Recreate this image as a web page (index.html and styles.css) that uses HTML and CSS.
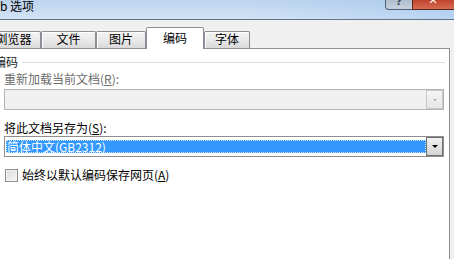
FILE: index.html
```html
<!DOCTYPE html>
<html lang="zh-CN">
<head>
<meta charset="utf-8">
<title>选项</title>
<link rel="stylesheet" href="styles.css">
</head>
<body>
<div class="window">
  <div class="titlebar">
    <div class="title-text">b 选项</div>
    <div class="caps">
      <div class="cap help"><span>?</span></div>
      <div class="cap close"><span>✕</span></div>
    </div>
  </div>
  <div class="tabs">
    <div class="tab t1">浏览器</div>
    <div class="tab t2">文件</div>
    <div class="tab t3">图片</div>
    <div class="tab active">编码</div>
    <div class="tab t5">字体</div>
  </div>
  <div class="panel">
    <div class="group-head">
      <span class="group-label">编码</span>
      <span class="group-line"></span>
    </div>
    <div class="group-body">
      <div class="label disabled">重新加载当前文档(<u>R</u>):</div>
      <div class="combo combo-disabled">
        <div class="combo-value"></div>
        <div class="combo-btn"><span class="arrow arrow-grey"></span></div>
      </div>
      <div class="label label-save">将此文档另存为(<u>S</u>):</div>
      <div class="combo combo-active">
        <div class="combo-value"><span class="selection">简体中文(GB2312)</span></div>
        <div class="combo-btn"><span class="arrow"></span></div>
      </div>
      <label class="check-row">
        <span class="checkbox"></span>
        <span class="check-label">始终以默认编码保存网页(<u>A</u>)</span>
      </label>
    </div>
  </div>
</div>
</body>
</html>
```

FILE: styles.css
```css
* { box-sizing: border-box; }
html, body {
  margin: 0;
  padding: 0;
}
body {
  width: 454px;
  height: 259px;
  overflow: hidden;
  background: #f0f0f0;
  font-family: "Noto Sans CJK SC", "Noto Sans", sans-serif;
  font-size: 12px;
  color: #000;
}
.window {
  display: flex;
  flex-direction: column;
  height: 259px;
}
.titlebar {
  height: 20px;
  flex: none;
  display: flex;
  justify-content: space-between;
  align-items: flex-start;
  border-bottom: 1px solid #627387;
  background:
    linear-gradient(to right, rgba(255,255,255,0) 55%, rgba(140,185,235,0.35)),
    linear-gradient(to bottom, #bcd4ee, #d3e3f5);
}
.title-text {
  line-height: 14px;
  margin-top: -1px;
  white-space: nowrap;
}
.caps {
  display: flex;
  margin-right: -8px;
}
.cap {
  height: 10px;
  overflow: hidden;
  display: flex;
  justify-content: center;
  align-items: flex-end;
  color: #fff;
  font-family: "DejaVu Sans", sans-serif;
  font-weight: bold;
  line-height: 10px;
}
.help {
  width: 27px;
  border: 1px solid #4f5f74;
  border-top: 0;
  border-right: 0;
  border-radius: 0 0 0 4px;
  background: linear-gradient(to bottom, #aebbcb, #c8d3df);
  color: #3a4a5e;
  font-size: 11px;
}
.help span { transform: translateY(-2px); }
.close {
  width: 50px;
  border: 1px solid #5a2a22;
  border-top: 0;
  border-radius: 0 0 4px 0;
  background: linear-gradient(to bottom, #c0442f, #d86a52);
  font-size: 11px;
  padding-right: 8px;
}
.close span { transform: translateY(-3px); }

.tabs {
  height: 28px;
  flex: none;
  display: flex;
  align-items: flex-end;
  margin-left: -14px;
  position: relative;
  z-index: 1;
}
.tab {
  height: 17px;
  line-height: 14px;
  text-align: center;
  border: 1px solid #8b8e96;
  border-bottom: 0;
  border-radius: 2px 2px 0 0;
  background: linear-gradient(to bottom, #f3f3f3 0%, #ebebeb 45%, #d9d9d9 100%);
  box-shadow: inset 1px 1px 0 #ffffff;
  white-space: nowrap;
}
.t1 { width: 55px; }
.t2 { width: 55px; }
.t3 { width: 50px; }
.t5 { width: 46px; }
.tab.active {
  width: 58px;
  height: 22px;
  margin-bottom: -1px;
  padding-top: 3px;
  background: #ffffff;
  box-shadow: none;
}

.panel {
  flex: 1;
  margin-left: -16px;
  width: 466px;
  background: #ffffff;
  border: 1px solid #8b8e96;
  border-bottom: 0;
  padding: 6px 4px 0 9px;
}
.group-head {
  display: flex;
  align-items: center;
  gap: 4px;
  line-height: 14px;
}
.group-label {
  color: #1a1a1a;
}
.group-line {
  flex: 1;
  height: 1px;
  background: #d5dde6;
  margin-top: 0;
}
.group-body {
  padding-left: 10px;
  padding-right: 1px;
  display: flex;
  flex-direction: column;
}
.label {
  line-height: 14px;
  margin-top: 3px;
}
.label.disabled {
  color: #6d6d6d;
}
.label-save {
  margin-top: 11px;
}
.combo {
  height: 21px;
  margin-top: 3px;
  display: flex;
  border: 1px solid #acacac;
  background: #ffffff;
}
.combo-disabled {
  border-color: #b4b4b4;
  background: #f0f0f0;
}
.combo-active {
  margin-top: 1px;
  border-color: #8f8f8f;
}
.combo-value {
  flex: 1;
  padding: 3px 0 3px 1px;
  display: flex;
}
.selection {
  flex: 1;
  background: #3399ff;
  color: #ffffff;
  line-height: 13px;
  padding-left: 1px;
  outline: 1px dotted rgba(255,255,255,0.75);
  outline-offset: -1px;
  white-space: nowrap;
}
.combo-btn {
  width: 17px;
  flex: none;
  display: flex;
  align-items: center;
  justify-content: center;
  border: 1px solid #c8c8c8;
  background: linear-gradient(to bottom, #f6f6f6, #e6e6e6);
}
.combo-active .combo-btn {
  border-color: #6f6f6f;
  background: linear-gradient(to bottom, #f2f2f2, #d4d4d4);
}
.arrow {
  width: 0;
  height: 0;
  border-left: 3px solid transparent;
  border-right: 3px solid transparent;
  border-top: 3px solid #000;
}
.arrow-grey {
  border-top-color: #a8a8a8;
  border-left-width: 2px;
  border-right-width: 2px;
  border-top-width: 2px;
}
.check-row {
  display: flex;
  align-items: center;
  gap: 4px;
  margin-top: 11px;
  padding-left: 1px;
  line-height: 14px;
}
.checkbox {
  width: 13px;
  height: 13px;
  flex: none;
  border: 1px solid #8e8f8f;
  background: linear-gradient(135deg, #dcdcdc, #f6f6f6);
  box-shadow: inset 0 0 0 1px #f4f4f4;
}
.check-label {
  white-space: nowrap;
}
u {
  text-decoration: underline;
  text-underline-offset: 1px;
}
```
